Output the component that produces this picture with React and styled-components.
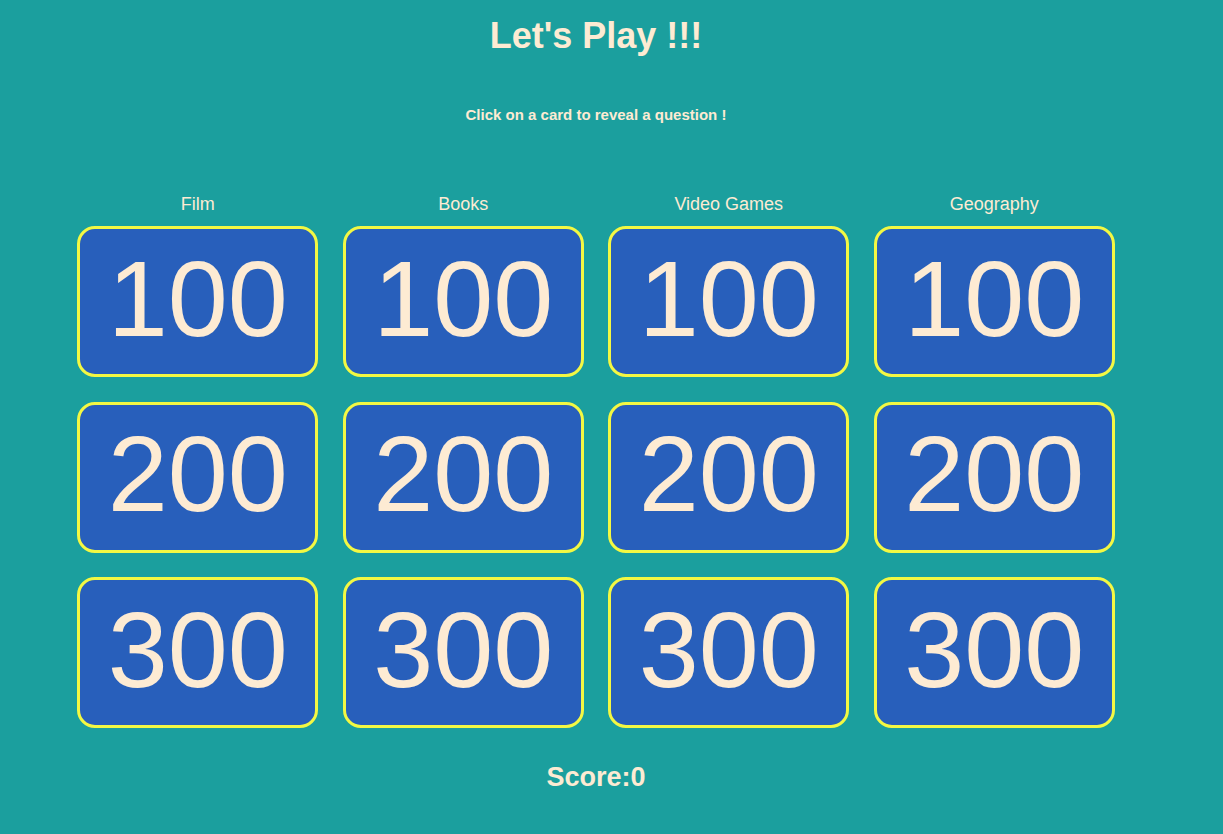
import React from 'react';
import styled, { createGlobalStyle } from 'styled-components';

const categories = ['Film', 'Books', 'Video Games', 'Geography'];
const values = [100, 200, 300];

const GlobalStyle = createGlobalStyle`
  html, body {
    margin: 0;
    padding: 0;
    background: #1b9f9e;
  }
  body {
    font-family: "Liberation Sans", Arial, sans-serif;
    color: #fdebd3;
  }
`;

const Page = styled.div`
  width: 1192px;
  min-height: 834px;
  display: flex;
  flex-direction: column;
  align-items: center;
  padding-top: 15px;
  box-sizing: border-box;
`;

const Title = styled.h1`
  margin: 0;
  font-size: 36px;
  font-weight: bold;
  line-height: 41px;
`;

const Subtitle = styled.h4`
  margin: 50px 0 0;
  font-size: 15px;
  font-weight: bold;
  line-height: 17px;
`;

const Board = styled.div`
  margin-top: 71px;
  display: grid;
  grid-template-columns: repeat(4, 241px);
  column-gap: 24.5px;
`;

const Column = styled.div`
  display: flex;
  flex-direction: column;
`;

const Category = styled.div`
  text-align: center;
  font-size: 18px;
  line-height: 21px;
  margin-bottom: 11px;
`;

const CardStack = styled.div`
  display: flex;
  flex-direction: column;
  gap: 24.5px;
`;

const Card = styled.button`
  width: 241px;
  height: 151px;
  box-sizing: border-box;
  border: 3px solid #f3f843;
  border-radius: 18px;
  background: #285fbb;
  color: #fdebd3;
  font-family: "Liberation Sans", Arial, sans-serif;
  font-size: 108px;
  line-height: 1;
  padding: 0 0 6px;
  display: flex;
  align-items: center;
  justify-content: center;
  cursor: pointer;
`;

const Score = styled.h2`
  margin: 34px 0 0;
  font-size: 27px;
  font-weight: bold;
  line-height: 31px;
`;

const App = () => {
  return (
    <>
      <GlobalStyle />
      <Page>
        <Title>Let's Play !!!</Title>
        <Subtitle>Click on a card to reveal a question !</Subtitle>
        <Board>
          {categories.map((cat) => (
            <Column key={cat}>
              <Category>{cat}</Category>
              <CardStack>
                {values.map((v) => (
                  <Card key={v}>{v}</Card>
                ))}
              </CardStack>
            </Column>
          ))}
        </Board>
        <Score>Score:0</Score>
      </Page>
    </>
  );
};

export default App;
